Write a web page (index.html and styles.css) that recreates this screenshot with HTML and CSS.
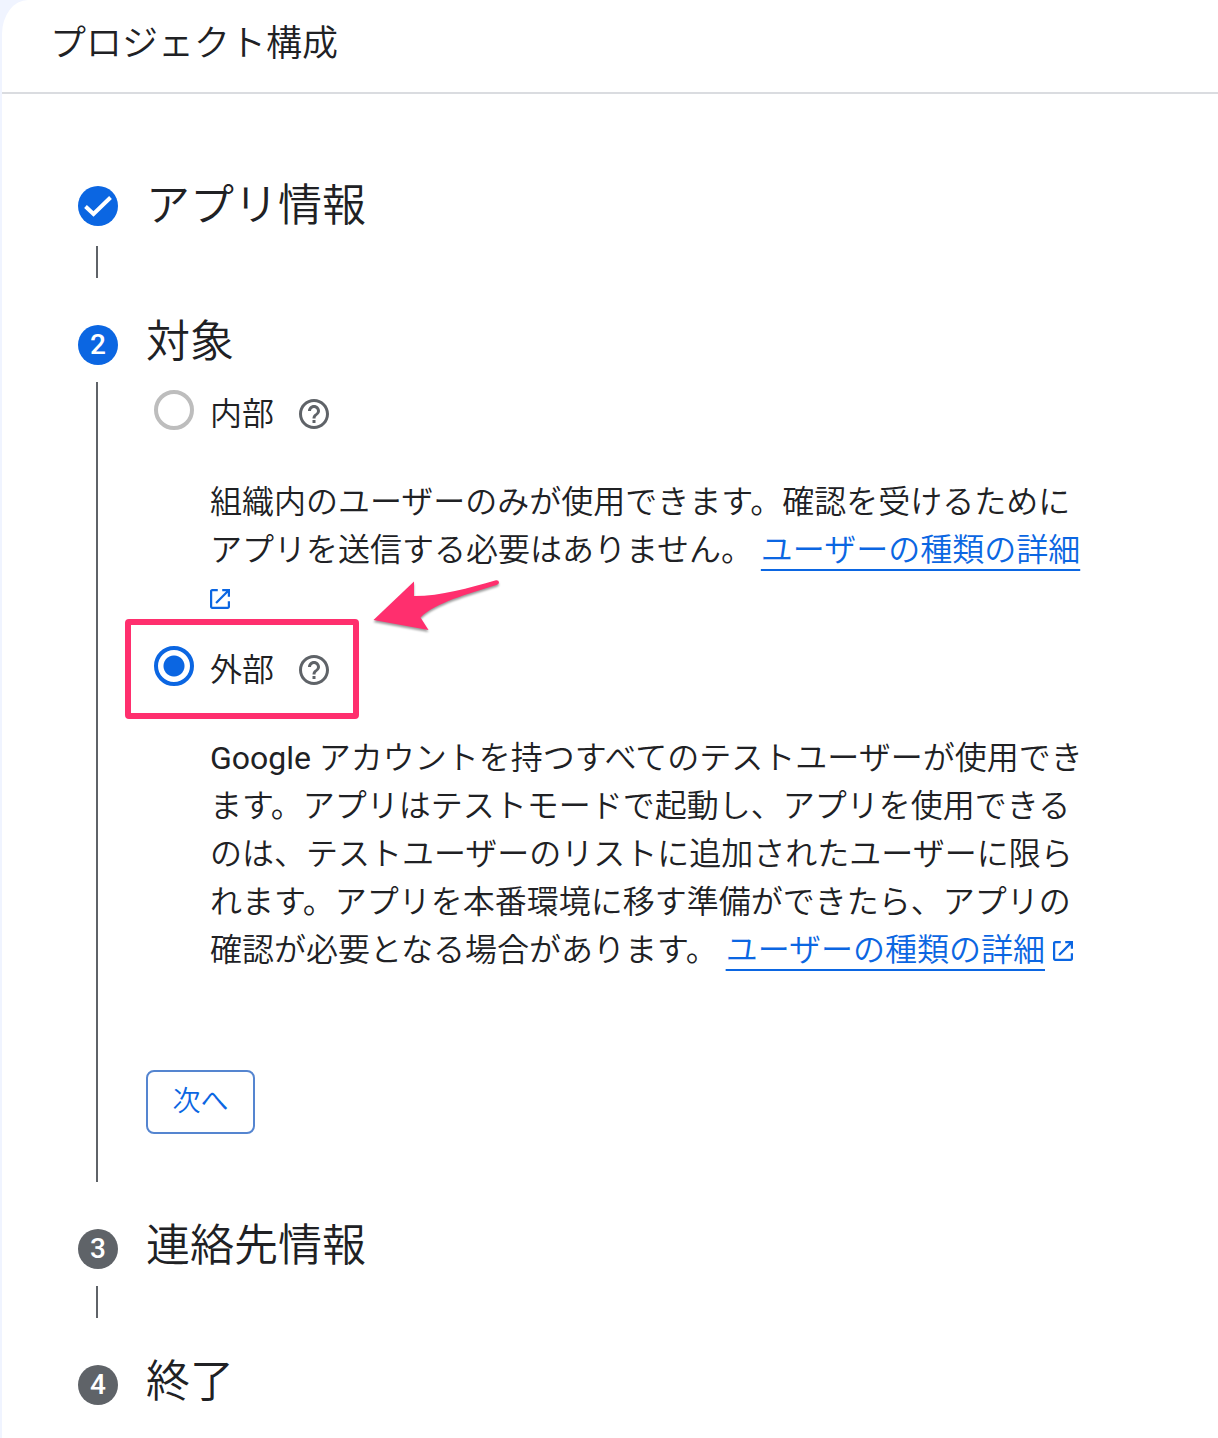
FILE: index.html
```html
<!DOCTYPE html>
<html lang="ja">
  <head>
    <meta charset="UTF-8" />
    <meta name="viewport" content="width=device-width, initial-scale=1" />
    <title>プロジェクト構成</title>
    <link rel="stylesheet" href="styles.css" />
  </head>
  <body>
    <!-- 共通アイコン -->
    <svg class="icon-defs" aria-hidden="true">
      <symbol id="icon-help" viewBox="2 2 20 20">
        <path d="M11 18h2v-2h-2v2zm1-16C6.480 2 2 6.480 2 12s4.480 10 10 10 10-4.480 10-10S17.520 2 12 2zm0 18c-4.410 0-8-3.590-8-8s3.590-8 8-8 8 3.590 8 8-3.590 8-8 8zm0-14c-2.210 0-4 1.790-4 4h2c0-1.100.900-2 2-2s2 .900 2 2c0 2-3 1.750-3 5h2c0-2.250 3-2.500 3-5 0-2.210-1.790-4-4-4z" />
      </symbol>
      <symbol id="icon-open" viewBox="3 3 18 18">
        <path d="M19 19H5V5h5V3H5c-1.110 0-2 .900-2 2v14c0 1.100.890 2 2 2h14c1.100 0 2-.900 2-2v-5h-2v5zM14 3v2h3.590l-9.830 9.830 1.410 1.410L19 6.410V10h2V3h-7z" />
      </symbol>
    </svg>

    <div class="page">
      <header class="page-header">
        <h1 class="page-title">プロジェクト構成</h1>
      </header>

      <main>
        <ol class="stepper">
          <li class="step done">
            <div class="rail">
              <svg class="marker" viewBox="0 0 40 40" role="img" aria-label="完了">
                <path class="check" d="M7.500 20.500l8 7.500L32.500 11.500" />
              </svg>
            </div>
            <div class="step-content">
              <h2 class="step-title">アプリ情報</h2>
            </div>
          </li>

          <li class="step active">
            <div class="rail"><span class="marker">2</span></div>
            <div class="step-content">
              <h2 class="step-title">対象</h2>
              <form class="audience">
                <div class="option">
                  <div class="option-row">
                    <input type="radio" class="radio" name="audience" id="internal" />
                    <label for="internal">内部</label>
                    <button type="button" class="help" aria-label="内部のヘルプ">
                      <svg><use href="#icon-help" /></svg>
                    </button>
                  </div>
                  <p class="description">
                    組織内のユーザーのみが使用できます。確認を受けるためにアプリを送信する必要はありません。
                    <a href="#" class="link"><span class="link-text">ユーザーの種類の詳細</span> <svg class="open-icon"><use href="#icon-open" /></svg></a>
                  </p>
                </div>

                <div class="option">
                  <div class="option-row">
                    <input type="radio" class="radio" name="audience" id="external" checked />
                    <label for="external">外部</label>
                    <button type="button" class="help" aria-label="外部のヘルプ">
                      <svg><use href="#icon-help" /></svg>
                    </button>
                    <!-- 選択箇所の強調 -->
                    <span class="highlight"></span>
                    <svg class="arrow" viewBox="0 0 136 60" aria-hidden="true">
                      <path d="M3.500 42L44 3.500V18C72 18 98 10 126 2.200Q129 2 129 4.500Q129 6 127 6.800C98 16 65 25 50.500 39.500L58.500 52Z" />
                    </svg>
                  </div>
                  <p class="description">
                    <span class="latin">Google</span> アカウントを持つすべてのテストユーザーが使用できます。アプリはテストモードで起動し、アプリを使用できるのは、テストユーザーのリストに追加されたユーザーに限られます。アプリを本番環境に移す準備ができたら、アプリの確認が必要となる場合があります。
                    <a href="#" class="link"><span class="link-text">ユーザーの種類の詳細</span> <svg class="open-icon"><use href="#icon-open" /></svg></a>
                  </p>
                </div>

                <button type="button" class="next">次へ</button>
              </form>
            </div>
          </li>

          <li class="step">
            <div class="rail"><span class="marker">3</span></div>
            <div class="step-content">
              <h2 class="step-title">連絡先情報</h2>
            </div>
          </li>

          <li class="step">
            <div class="rail"><span class="marker">4</span></div>
            <div class="step-content">
              <h2 class="step-title">終了</h2>
            </div>
          </li>
        </ol>
      </main>
    </div>
  </body>
</html>
```

FILE: styles.css
```css
* {
  box-sizing: border-box;
}

body {
  margin: 0;
  background: #f0f4ff;
  color: #202124;
  font-family: Roboto, "Noto Sans CJK JP", sans-serif;
  font-size: 32px;
  font-weight: 350;
  line-height: 48px;
}

h1,
h2,
p,
ol {
  margin: 0;
  padding: 0;
  font-weight: 350;
}

.icon-defs {
  display: none;
}

.page {
  min-height: 100vh;
  margin-left: 2px;
  background: #fff;
  border-radius: 26px 0 0 0 / 34px 0 0 0;
}

/* ヘッダー */
.page-header {
  padding: 20px 48px 24px;
  border-bottom: 2px solid #dadce0;
}

.page-title {
  font-size: 36px;
}

/* ステッパー */
.stepper {
  padding: 92px 128px 32px 76px;
  list-style: none;
}

.step {
  display: flex;
  gap: 28px;
}

.step:not(:last-child) {
  margin-bottom: 47px;
}

.rail {
  display: flex;
  flex-direction: column;
  flex: none;
  gap: 17px;
}

/* ステップ間の縦線 */
.step:not(:last-child) .rail::after {
  content: "";
  flex: 1;
  width: 2px;
  min-height: 32px;
  margin-left: 18px;
  background: #5f6368;
}

.marker {
  width: 40px;
  height: 40px;
  border-radius: 50%;
  background: #5f6368;
  color: #fff;
  font-size: 28px;
  font-weight: 500;
  line-height: 40px;
  text-align: center;
}

.done .marker,
.active .marker {
  background: #0b66e2;
}

.done .rail {
  gap: 20px;
}

.done .step-content {
  padding-top: 3px;
}

.check {
  fill: none;
  stroke: #fff;
  stroke-width: 4;
}

.step-content {
  flex: 1;
  min-width: 0;
}

.step-title {
  font-size: 44px;
  line-height: 34px;
}

/* 対象の選択 */
.audience {
  padding: 31px 0 48px;
}

.option {
  padding-left: 64px;
  margin-bottom: 24px;
}

.option-row {
  position: relative;
  display: flex;
  align-items: center;
  margin: 0 0 40px -56px;
}

.radio {
  appearance: none;
  align-self: flex-start;
  width: 40px;
  height: 40px;
  margin: 0 16px 0 0;
  border: 4px solid #bdbdbd;
  border-radius: 50%;
}

.radio:checked {
  border-color: #0b66e2;
  background: radial-gradient(circle, #0b66e2 10px, transparent 11px);
}

.help {
  display: flex;
  margin-left: 25px;
  padding: 0;
  border: none;
  background: none;
}

.help svg {
  width: 30px;
  height: 30px;
  fill: #5f6368;
}

.latin {
  font-weight: 400;
}

.link {
  color: #0b66e2;
  text-decoration: none;
}

.link-text {
  text-decoration: underline 2px;
  text-decoration-skip-ink: none;
  text-underline-offset: 8px;
}

.open-icon {
  width: 20px;
  height: 20px;
  fill: currentColor;
}

.highlight {
  position: absolute;
  top: -27px;
  left: -29px;
  width: 234px;
  height: 100px;
  border: 6px solid #ff2f6e;
  border-radius: 4px;
  pointer-events: none;
}

.arrow {
  position: absolute;
  top: -68px;
  left: 216px;
  width: 136px;
  height: 60px;
  fill: #ff2f6e;
  filter: drop-shadow(0 2px 1px rgba(0, 0, 0, 0.4));
  pointer-events: none;
}

.next {
  display: block;
  min-width: 109px;
  height: 64px;
  margin-top: 96px;
  padding: 0 24px;
  border: 2px solid #5585d0;
  border-radius: 8px;
  background: #fff;
  color: #0b66e2;
  font: inherit;
  font-size: 28px;
}
```
